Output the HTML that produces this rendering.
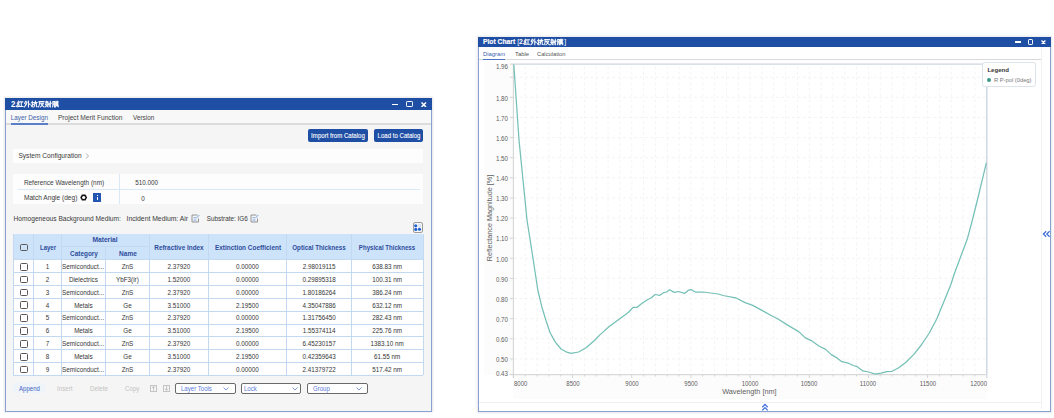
<!DOCTYPE html><html><head><meta charset="utf-8"><style>
html,body{margin:0;padding:0;background:#fff;width:1054px;height:418px;overflow:hidden;position:relative;font-family:"Liberation Sans", sans-serif}
.t{position:absolute;white-space:nowrap;font-family:"Liberation Sans",sans-serif}
.b{position:absolute}
</style></head><body>
<div class="b" style="left:3.00px;top:96.00px;width:431.00px;height:317.00px;background:rgba(0,0,0,0.035);border-radius:2px"></div>
<div class="b" style="left:4.00px;top:97.00px;width:429.00px;height:315.00px;background:rgba(0,0,0,0.03)"></div>
<div class="b" style="left:5.00px;top:98.00px;width:427.20px;height:313.50px;background:#f5f5f5;border:1.2px solid #87a1d3;border-top:none;box-sizing:border-box"></div>
<div class="b" style="left:5.00px;top:98.00px;width:427.20px;height:12.40px;background:#1f4fa5"></div>
<div class="t" style="left:10.60px;top:99.30px;font-size:8.4px;line-height:10px;color:#fff;font-weight:bold;transform:scaleX(0.92);transform-origin:0 50%;">2.</div>
<svg class="b" style="left:17.00px;top:101.10px;overflow:visible" width="42.30" height="6.10"><g transform="translate(0.00,0) scale(0.615,0.610)"><path d="M2.6,0.3 L0.8,3.6 L3.2,3.3 L0.6,7.0 L3.6,6.4 M0.5,9.6 L3.8,8.6 M4.6,1.4 H9.4 M7.0,1.4 V9.0 M4.2,9.0 H9.8" fill="none" stroke="#fff" stroke-width="1.05" stroke-opacity="0.95" vector-effect="non-scaling-stroke" stroke-linecap="square"/></g><g transform="translate(7.05,0) scale(0.615,0.610)"><path d="M2.8,0.2 L0.9,3.6 M2.0,1.8 H4.8 Q4.2,6.5 0.5,9.8 M1.4,4.3 L3.2,5.6 M7.2,0.2 V9.9 M7.5,4.0 L9.8,5.8" fill="none" stroke="#fff" stroke-width="1.05" stroke-opacity="0.95" vector-effect="non-scaling-stroke" stroke-linecap="square"/></g><g transform="translate(14.10,0) scale(0.615,0.610)"><path d="M0.3,3.0 H3.4 M2.0,0.3 V9.4 L1.0,8.9 M0.3,7.6 L3.6,5.8 M7.0,0.2 L7.4,1.3 M4.4,2.3 H9.9 M5.8,4.2 H8.6 V9.1 L9.9,9.3 M5.8,4.2 V7.0 L4.4,9.7" fill="none" stroke="#fff" stroke-width="1.05" stroke-opacity="0.95" vector-effect="non-scaling-stroke" stroke-linecap="square"/></g><g transform="translate(21.15,0) scale(0.615,0.610)"><path d="M1.4,1.0 H9.6 M2.0,1.0 V5.5 Q2.0,8.0 0.4,9.7 M3.6,3.6 H8.6 Q7.0,7.5 3.6,9.7 M5.0,5.2 Q7.0,8.5 9.8,9.7" fill="none" stroke="#fff" stroke-width="1.05" stroke-opacity="0.95" vector-effect="non-scaling-stroke" stroke-linecap="square"/></g><g transform="translate(28.20,0) scale(0.615,0.610)"><path d="M2.4,0.2 L1.9,1.0 M1.0,1.4 H4.4 V9.6 L3.6,9.2 M1.0,1.4 V5.4 M1.0,3.4 H4.4 M0.4,6.0 H5.0 M3.2,6.4 L0.4,9.6 M5.5,3.6 H9.9 M8.4,0.3 V9.6 L7.4,9.1 M6.3,5.6 L7.3,7.0" fill="none" stroke="#fff" stroke-width="1.05" stroke-opacity="0.95" vector-effect="non-scaling-stroke" stroke-linecap="square"/></g><g transform="translate(35.25,0) scale(0.615,0.610)"><path d="M0.9,1.0 V7.8 L0.4,9.6 M0.9,1.0 H3.6 V9.6 M0.9,3.8 H3.6 M0.9,6.2 H3.6 M4.6,1.5 H9.9 M6.2,0.3 V2.6 M8.4,0.3 V2.6 M5.5,3.2 H9.0 V6.0 H5.5 Z M5.5,4.6 H9.0 M4.5,7.0 H9.9 M7.2,6.0 L5.0,9.7 M7.3,7.2 L9.9,9.6" fill="none" stroke="#fff" stroke-width="1.05" stroke-opacity="0.95" vector-effect="non-scaling-stroke" stroke-linecap="square"/></g></svg>
<div class="b" style="left:392.00px;top:103.55px;width:6.20px;height:1.50px;background:#fff"></div>
<div class="b" style="left:406.00px;top:101.40px;width:6.70px;height:5.80px;border:1.5px solid #fff;box-sizing:border-box;border-radius:1.2px"></div>
<svg class="b" style="left:421.30px;top:101.55px" width="5.50" height="5.50"><path d="M0.5,0.5 L5.00,5.00 M5.00,0.5 L0.5,5.00" stroke="#fff" stroke-width="1.5"/></svg>
<div class="b" style="left:6.20px;top:110.40px;width:424.80px;height:12.90px;background:#f8f8f8"></div>
<div class="b" style="left:6.20px;top:123.30px;width:424.80px;height:1.40px;background:#dcdcdc"></div>
<div class="b" style="left:10.60px;top:123.10px;width:37.40px;height:1.70px;background:#5b7fc6"></div>
<div class="t" style="left:10.80px;top:113.00px;font-size:6.3px;line-height:10px;color:#3f5fa8;font-weight:normal;">Layer Design</div>
<div class="t" style="left:57.90px;top:113.00px;font-size:6.63px;line-height:10px;color:#444;font-weight:normal;">Project Merit Function</div>
<div class="t" style="left:133.00px;top:113.00px;font-size:6.36px;line-height:10px;color:#444;font-weight:normal;">Version</div>
<div class="b" style="left:308.00px;top:129.20px;width:59.90px;height:13.30px;background:#1f4fa5;border-radius:2px"></div>
<div class="t" style="left:237.95px;width:200px;text-align:center;top:131.10px;font-size:7.4px;line-height:10px;color:#fff;font-weight:normal;-webkit-text-stroke:0.1px #fff;transform:scaleX(0.8229729729729729);transform-origin:50% 50%;">Import from Catalog</div>
<div class="b" style="left:374.10px;top:129.20px;width:49.10px;height:13.30px;background:#1f4fa5;border-radius:2px"></div>
<div class="t" style="left:298.65px;width:200px;text-align:center;top:131.10px;font-size:7.4px;line-height:10px;color:#fff;font-weight:normal;-webkit-text-stroke:0.1px #fff;transform:scaleX(0.8216216216216216);transform-origin:50% 50%;">Load to Catalog</div>
<div class="b" style="left:13.00px;top:149.20px;width:410.00px;height:14.30px;background:#fdfdfd"></div>
<div class="t" style="left:18.40px;top:151.20px;font-size:6.62px;line-height:10px;color:#3a3a3a;font-weight:normal;">System Configuration</div>
<svg class="b" style="left:84.6px;top:152.9px" width="5" height="6"><path d="M1,0.5 L3.5,3 L1,5.5" fill="none" stroke="#999" stroke-width="0.8"/></svg>
<div class="b" style="left:13.00px;top:174.30px;width:410.00px;height:30.20px;background:#fdfdfd"></div>
<div class="b" style="left:119.00px;top:174.30px;width:0.90px;height:30.20px;background:#dbe8f6"></div>
<div class="b" style="left:18.40px;top:188.50px;width:401.60px;height:0.90px;background:#dbe8f6"></div>
<div class="t" style="left:23.90px;top:177.60px;font-size:6.45px;line-height:10px;color:#3a3a3a;font-weight:normal;">Reference Wavelength (nm)</div>
<div class="t" style="left:135.30px;top:178.10px;font-size:6.3px;line-height:10px;color:#3a3a3a;font-weight:normal;">510.000</div>
<div class="t" style="left:23.90px;top:193.00px;font-size:6.6px;line-height:10px;color:#3a3a3a;font-weight:normal;">Match Angle (deg)</div>
<div class="t" style="left:141.20px;top:193.50px;font-size:6.3px;line-height:10px;color:#3a3a3a;font-weight:normal;">0</div>
<svg class="b" style="left:80.0px;top:194.2px" width="7.4" height="7" viewBox="0 0 10 9.5"><path d="M0.3,4.75 L2.6,0.6 L7.4,0.6 L9.7,4.75 L7.4,8.9 L2.6,8.9 Z" fill="#151515"/><circle cx="5" cy="4.75" r="2.2" fill="#fdfdfd"/></svg>
<div class="b" style="left:93.10px;top:193.30px;width:7.90px;height:8.30px;background:#2455b0"></div>
<div class="b" style="left:96.60px;top:194.60px;width:1.10px;height:1.10px;background:#fff"></div>
<div class="b" style="left:96.60px;top:196.50px;width:1.10px;height:3.90px;background:#fff"></div>
<div class="t" style="left:13.60px;top:213.60px;font-size:6.62px;line-height:10px;color:#3a3a3a;font-weight:normal;">Homogeneous Background Medium:</div>
<div class="t" style="left:126.50px;top:213.60px;font-size:6.8px;line-height:10px;color:#3a3a3a;font-weight:normal;">Incident Medium: Air</div>
<div class="t" style="left:206.80px;top:213.60px;font-size:6.37px;line-height:10px;color:#3a3a3a;font-weight:normal;">Substrate: IG6</div>
<svg class="b" style="left:190.5px;top:213.8px" width="9" height="9" viewBox="0 0 9 9"><path d="M6.5,1 H1 V8 H7.5 V4.5" fill="none" stroke="#8a8a8a" stroke-width="0.9"/><path d="M2.5,3.5 H5 M2.5,5.2 H5.5 M2.5,6.8 H5.5" stroke="#7fa6e0" stroke-width="0.7"/><path d="M5.5,4 L8.3,1" stroke="#6b9ae0" stroke-width="0.9"/></svg>
<svg class="b" style="left:250.3px;top:213.8px" width="9" height="9" viewBox="0 0 9 9"><path d="M6.5,1 H1 V8 H7.5 V4.5" fill="none" stroke="#8a8a8a" stroke-width="0.9"/><path d="M2.5,3.5 H5 M2.5,5.2 H5.5 M2.5,6.8 H5.5" stroke="#7fa6e0" stroke-width="0.7"/><path d="M5.5,4 L8.3,1" stroke="#6b9ae0" stroke-width="0.9"/></svg>
<div class="b" style="left:412.60px;top:222.20px;width:10.20px;height:10.50px;border:1.2px solid #9c9c9c;border-radius:2px;box-sizing:border-box;background:#f7f7f7"></div>
<svg class="b" style="left:0;top:0" width="1054" height="418"><circle cx="415.7" cy="225.8" r="1.55" fill="#1f5ed4"/><circle cx="419.6" cy="225.7" r="1.3" fill="none" stroke="#bcd0f0" stroke-width="0.7"/><circle cx="415.8" cy="229.4" r="1.55" fill="#1f5ed4"/><circle cx="419.5" cy="229.3" r="1.55" fill="#1f5ed4"/></svg>
<div class="b" style="left:13.40px;top:234.00px;width:409.60px;height:25.70px;background:#cde3fa;border-radius:2px 2px 0 0"></div>
<div class="b" style="left:13.40px;top:259.70px;width:409.60px;height:115.65px;background:#fff"></div>
<div class="b" style="left:33.25px;top:234.00px;width:0.90px;height:141.35px;background:#c3d9f2"></div>
<div class="b" style="left:60.85px;top:234.00px;width:0.90px;height:141.35px;background:#c3d9f2"></div>
<div class="b" style="left:105.05px;top:246.50px;width:0.90px;height:128.85px;background:#c3d9f2"></div>
<div class="b" style="left:148.95px;top:234.00px;width:0.90px;height:141.35px;background:#c3d9f2"></div>
<div class="b" style="left:207.95px;top:234.00px;width:0.90px;height:141.35px;background:#c3d9f2"></div>
<div class="b" style="left:286.15px;top:234.00px;width:0.90px;height:141.35px;background:#c3d9f2"></div>
<div class="b" style="left:351.05px;top:234.00px;width:0.90px;height:141.35px;background:#c3d9f2"></div>
<div class="b" style="left:61.30px;top:246.10px;width:88.10px;height:0.80px;background:#c3d9f2"></div>
<div class="b" style="left:13.40px;top:259.25px;width:409.60px;height:0.90px;background:#c3d9f2"></div>
<div class="b" style="left:13.40px;top:272.10px;width:409.60px;height:0.90px;background:#c3d9f2"></div>
<div class="b" style="left:13.40px;top:284.95px;width:409.60px;height:0.90px;background:#c3d9f2"></div>
<div class="b" style="left:13.40px;top:297.80px;width:409.60px;height:0.90px;background:#c3d9f2"></div>
<div class="b" style="left:13.40px;top:310.65px;width:409.60px;height:0.90px;background:#c3d9f2"></div>
<div class="b" style="left:13.40px;top:323.50px;width:409.60px;height:0.90px;background:#c3d9f2"></div>
<div class="b" style="left:13.40px;top:336.35px;width:409.60px;height:0.90px;background:#c3d9f2"></div>
<div class="b" style="left:13.40px;top:349.20px;width:409.60px;height:0.90px;background:#c3d9f2"></div>
<div class="b" style="left:13.40px;top:362.05px;width:409.60px;height:0.90px;background:#c3d9f2"></div>
<div class="b" style="left:12.90px;top:234.00px;width:0.90px;height:141.35px;background:#c3d9f2"></div>
<div class="b" style="left:13.40px;top:374.85px;width:409.60px;height:0.90px;background:#c3d9f2"></div>
<div class="b" style="left:422.60px;top:234.00px;width:0.90px;height:141.35px;background:#c3d9f2"></div>
<div class="b" style="left:20.00px;top:243.50px;width:7.80px;height:7.70px;border:1.25px solid #5e5656;border-radius:1.5px;box-sizing:border-box"></div>
<div class="t" style="left:-52.25px;width:200px;text-align:center;top:242.80px;font-size:7.0px;line-height:10px;color:#2d4d9c;font-weight:bold;transform:scaleX(0.862);transform-origin:50% 50%;">Layer</div>
<div class="t" style="left:5.45px;width:200px;text-align:center;top:235.40px;font-size:7.0px;line-height:10px;color:#2d4d9c;font-weight:bold;transform:scaleX(0.949);transform-origin:50% 50%;">Material</div>
<div class="t" style="left:-16.40px;width:200px;text-align:center;top:248.90px;font-size:7.0px;line-height:10px;color:#2d4d9c;font-weight:bold;transform:scaleX(0.916);transform-origin:50% 50%;">Category</div>
<div class="t" style="left:27.60px;width:200px;text-align:center;top:248.90px;font-size:7.0px;line-height:10px;color:#2d4d9c;font-weight:bold;transform:scaleX(0.934);transform-origin:50% 50%;">Name</div>
<div class="t" style="left:79.05px;width:200px;text-align:center;top:242.80px;font-size:7.0px;line-height:10px;color:#2d4d9c;font-weight:bold;transform:scaleX(0.912);transform-origin:50% 50%;">Refractive Index</div>
<div class="t" style="left:147.85px;width:200px;text-align:center;top:242.80px;font-size:7.0px;line-height:10px;color:#2d4d9c;font-weight:bold;transform:scaleX(0.919);transform-origin:50% 50%;">Extinction Coefficient</div>
<div class="t" style="left:219.05px;width:200px;text-align:center;top:242.80px;font-size:7.0px;line-height:10px;color:#2d4d9c;font-weight:bold;transform:scaleX(0.893);transform-origin:50% 50%;">Optical Thickness</div>
<div class="t" style="left:287.15px;width:200px;text-align:center;top:242.80px;font-size:7.0px;line-height:10px;color:#2d4d9c;font-weight:bold;transform:scaleX(0.872);transform-origin:50% 50%;">Physical Thickness</div>
<div class="b" style="left:20.20px;top:262.82px;width:7.70px;height:7.80px;border:1.25px solid #5e5656;border-radius:1.5px;box-sizing:border-box"></div>
<div class="t" style="left:-52.50px;width:200px;text-align:center;top:262.02px;font-size:6.3px;line-height:10px;color:#363636;font-weight:normal;">1</div>
<div class="t" style="left:61.90px;top:262.02px;font-size:6.3px;line-height:10px;color:#363636;font-weight:normal;letter-spacing:0.05px">Semiconduct...</div>
<div class="t" style="left:27.45px;width:200px;text-align:center;top:262.02px;font-size:6.3px;line-height:10px;color:#363636;font-weight:normal;">ZnS</div>
<div class="t" style="left:78.90px;width:200px;text-align:center;top:262.02px;font-size:6.3px;line-height:10px;color:#363636;font-weight:normal;">2.37920</div>
<div class="t" style="left:147.50px;width:200px;text-align:center;top:262.02px;font-size:6.3px;line-height:10px;color:#363636;font-weight:normal;">0.00000</div>
<div class="t" style="left:219.05px;width:200px;text-align:center;top:262.02px;font-size:6.3px;line-height:10px;color:#363636;font-weight:normal;">2.98019115</div>
<div class="t" style="left:287.25px;width:200px;text-align:center;top:262.02px;font-size:6.3px;line-height:10px;color:#363636;font-weight:normal;">638.83 nm</div>
<div class="b" style="left:20.20px;top:275.68px;width:7.70px;height:7.80px;border:1.25px solid #5e5656;border-radius:1.5px;box-sizing:border-box"></div>
<div class="t" style="left:-52.50px;width:200px;text-align:center;top:274.88px;font-size:6.3px;line-height:10px;color:#363636;font-weight:normal;">2</div>
<div class="t" style="left:-16.60px;width:200px;text-align:center;top:274.88px;font-size:6.3px;line-height:10px;color:#363636;font-weight:normal;">Dielectrics</div>
<div class="t" style="left:27.45px;width:200px;text-align:center;top:274.88px;font-size:6.3px;line-height:10px;color:#363636;font-weight:normal;">YbF3(ir)</div>
<div class="t" style="left:78.90px;width:200px;text-align:center;top:274.88px;font-size:6.3px;line-height:10px;color:#363636;font-weight:normal;">1.52000</div>
<div class="t" style="left:147.50px;width:200px;text-align:center;top:274.88px;font-size:6.3px;line-height:10px;color:#363636;font-weight:normal;">0.00000</div>
<div class="t" style="left:219.05px;width:200px;text-align:center;top:274.88px;font-size:6.3px;line-height:10px;color:#363636;font-weight:normal;">0.29895318</div>
<div class="t" style="left:287.25px;width:200px;text-align:center;top:274.88px;font-size:6.3px;line-height:10px;color:#363636;font-weight:normal;">100.31 nm</div>
<div class="b" style="left:20.20px;top:288.52px;width:7.70px;height:7.80px;border:1.25px solid #5e5656;border-radius:1.5px;box-sizing:border-box"></div>
<div class="t" style="left:-52.50px;width:200px;text-align:center;top:287.72px;font-size:6.3px;line-height:10px;color:#363636;font-weight:normal;">3</div>
<div class="t" style="left:61.90px;top:287.72px;font-size:6.3px;line-height:10px;color:#363636;font-weight:normal;letter-spacing:0.05px">Semiconduct...</div>
<div class="t" style="left:27.45px;width:200px;text-align:center;top:287.72px;font-size:6.3px;line-height:10px;color:#363636;font-weight:normal;">ZnS</div>
<div class="t" style="left:78.90px;width:200px;text-align:center;top:287.72px;font-size:6.3px;line-height:10px;color:#363636;font-weight:normal;">2.37920</div>
<div class="t" style="left:147.50px;width:200px;text-align:center;top:287.72px;font-size:6.3px;line-height:10px;color:#363636;font-weight:normal;">0.00000</div>
<div class="t" style="left:219.05px;width:200px;text-align:center;top:287.72px;font-size:6.3px;line-height:10px;color:#363636;font-weight:normal;">1.80186264</div>
<div class="t" style="left:287.25px;width:200px;text-align:center;top:287.72px;font-size:6.3px;line-height:10px;color:#363636;font-weight:normal;">386.24 nm</div>
<div class="b" style="left:20.20px;top:301.38px;width:7.70px;height:7.80px;border:1.25px solid #5e5656;border-radius:1.5px;box-sizing:border-box"></div>
<div class="t" style="left:-52.50px;width:200px;text-align:center;top:300.57px;font-size:6.3px;line-height:10px;color:#363636;font-weight:normal;">4</div>
<div class="t" style="left:-16.60px;width:200px;text-align:center;top:300.57px;font-size:6.3px;line-height:10px;color:#363636;font-weight:normal;">Metals</div>
<div class="t" style="left:27.45px;width:200px;text-align:center;top:300.57px;font-size:6.3px;line-height:10px;color:#363636;font-weight:normal;">Ge</div>
<div class="t" style="left:78.90px;width:200px;text-align:center;top:300.57px;font-size:6.3px;line-height:10px;color:#363636;font-weight:normal;">3.51000</div>
<div class="t" style="left:147.50px;width:200px;text-align:center;top:300.57px;font-size:6.3px;line-height:10px;color:#363636;font-weight:normal;">2.19500</div>
<div class="t" style="left:219.05px;width:200px;text-align:center;top:300.57px;font-size:6.3px;line-height:10px;color:#363636;font-weight:normal;">4.35047886</div>
<div class="t" style="left:287.25px;width:200px;text-align:center;top:300.57px;font-size:6.3px;line-height:10px;color:#363636;font-weight:normal;">632.12 nm</div>
<div class="b" style="left:20.20px;top:314.22px;width:7.70px;height:7.80px;border:1.25px solid #5e5656;border-radius:1.5px;box-sizing:border-box"></div>
<div class="t" style="left:-52.50px;width:200px;text-align:center;top:313.42px;font-size:6.3px;line-height:10px;color:#363636;font-weight:normal;">5</div>
<div class="t" style="left:61.90px;top:313.42px;font-size:6.3px;line-height:10px;color:#363636;font-weight:normal;letter-spacing:0.05px">Semiconduct...</div>
<div class="t" style="left:27.45px;width:200px;text-align:center;top:313.42px;font-size:6.3px;line-height:10px;color:#363636;font-weight:normal;">ZnS</div>
<div class="t" style="left:78.90px;width:200px;text-align:center;top:313.42px;font-size:6.3px;line-height:10px;color:#363636;font-weight:normal;">2.37920</div>
<div class="t" style="left:147.50px;width:200px;text-align:center;top:313.42px;font-size:6.3px;line-height:10px;color:#363636;font-weight:normal;">0.00000</div>
<div class="t" style="left:219.05px;width:200px;text-align:center;top:313.42px;font-size:6.3px;line-height:10px;color:#363636;font-weight:normal;">1.31756450</div>
<div class="t" style="left:287.25px;width:200px;text-align:center;top:313.42px;font-size:6.3px;line-height:10px;color:#363636;font-weight:normal;">282.43 nm</div>
<div class="b" style="left:20.20px;top:327.07px;width:7.70px;height:7.80px;border:1.25px solid #5e5656;border-radius:1.5px;box-sizing:border-box"></div>
<div class="t" style="left:-52.50px;width:200px;text-align:center;top:326.27px;font-size:6.3px;line-height:10px;color:#363636;font-weight:normal;">6</div>
<div class="t" style="left:-16.60px;width:200px;text-align:center;top:326.27px;font-size:6.3px;line-height:10px;color:#363636;font-weight:normal;">Metals</div>
<div class="t" style="left:27.45px;width:200px;text-align:center;top:326.27px;font-size:6.3px;line-height:10px;color:#363636;font-weight:normal;">Ge</div>
<div class="t" style="left:78.90px;width:200px;text-align:center;top:326.27px;font-size:6.3px;line-height:10px;color:#363636;font-weight:normal;">3.51000</div>
<div class="t" style="left:147.50px;width:200px;text-align:center;top:326.27px;font-size:6.3px;line-height:10px;color:#363636;font-weight:normal;">2.19500</div>
<div class="t" style="left:219.05px;width:200px;text-align:center;top:326.27px;font-size:6.3px;line-height:10px;color:#363636;font-weight:normal;">1.55374114</div>
<div class="t" style="left:287.25px;width:200px;text-align:center;top:326.27px;font-size:6.3px;line-height:10px;color:#363636;font-weight:normal;">225.76 nm</div>
<div class="b" style="left:20.20px;top:339.92px;width:7.70px;height:7.80px;border:1.25px solid #5e5656;border-radius:1.5px;box-sizing:border-box"></div>
<div class="t" style="left:-52.50px;width:200px;text-align:center;top:339.12px;font-size:6.3px;line-height:10px;color:#363636;font-weight:normal;">7</div>
<div class="t" style="left:61.90px;top:339.12px;font-size:6.3px;line-height:10px;color:#363636;font-weight:normal;letter-spacing:0.05px">Semiconduct...</div>
<div class="t" style="left:27.45px;width:200px;text-align:center;top:339.12px;font-size:6.3px;line-height:10px;color:#363636;font-weight:normal;">ZnS</div>
<div class="t" style="left:78.90px;width:200px;text-align:center;top:339.12px;font-size:6.3px;line-height:10px;color:#363636;font-weight:normal;">2.37920</div>
<div class="t" style="left:147.50px;width:200px;text-align:center;top:339.12px;font-size:6.3px;line-height:10px;color:#363636;font-weight:normal;">0.00000</div>
<div class="t" style="left:219.05px;width:200px;text-align:center;top:339.12px;font-size:6.3px;line-height:10px;color:#363636;font-weight:normal;">6.45230157</div>
<div class="t" style="left:287.25px;width:200px;text-align:center;top:339.12px;font-size:6.3px;line-height:10px;color:#363636;font-weight:normal;">1383.10 nm</div>
<div class="b" style="left:20.20px;top:352.77px;width:7.70px;height:7.80px;border:1.25px solid #5e5656;border-radius:1.5px;box-sizing:border-box"></div>
<div class="t" style="left:-52.50px;width:200px;text-align:center;top:351.97px;font-size:6.3px;line-height:10px;color:#363636;font-weight:normal;">8</div>
<div class="t" style="left:-16.60px;width:200px;text-align:center;top:351.97px;font-size:6.3px;line-height:10px;color:#363636;font-weight:normal;">Metals</div>
<div class="t" style="left:27.45px;width:200px;text-align:center;top:351.97px;font-size:6.3px;line-height:10px;color:#363636;font-weight:normal;">Ge</div>
<div class="t" style="left:78.90px;width:200px;text-align:center;top:351.97px;font-size:6.3px;line-height:10px;color:#363636;font-weight:normal;">3.51000</div>
<div class="t" style="left:147.50px;width:200px;text-align:center;top:351.97px;font-size:6.3px;line-height:10px;color:#363636;font-weight:normal;">2.19500</div>
<div class="t" style="left:219.05px;width:200px;text-align:center;top:351.97px;font-size:6.3px;line-height:10px;color:#363636;font-weight:normal;">0.42359643</div>
<div class="t" style="left:287.25px;width:200px;text-align:center;top:351.97px;font-size:6.3px;line-height:10px;color:#363636;font-weight:normal;">61.55 nm</div>
<div class="b" style="left:20.20px;top:365.62px;width:7.70px;height:7.80px;border:1.25px solid #5e5656;border-radius:1.5px;box-sizing:border-box"></div>
<div class="t" style="left:-52.50px;width:200px;text-align:center;top:364.82px;font-size:6.3px;line-height:10px;color:#363636;font-weight:normal;">9</div>
<div class="t" style="left:61.90px;top:364.82px;font-size:6.3px;line-height:10px;color:#363636;font-weight:normal;letter-spacing:0.05px">Semiconduct...</div>
<div class="t" style="left:27.45px;width:200px;text-align:center;top:364.82px;font-size:6.3px;line-height:10px;color:#363636;font-weight:normal;">ZnS</div>
<div class="t" style="left:78.90px;width:200px;text-align:center;top:364.82px;font-size:6.3px;line-height:10px;color:#363636;font-weight:normal;">2.37920</div>
<div class="t" style="left:147.50px;width:200px;text-align:center;top:364.82px;font-size:6.3px;line-height:10px;color:#363636;font-weight:normal;">0.00000</div>
<div class="t" style="left:219.05px;width:200px;text-align:center;top:364.82px;font-size:6.3px;line-height:10px;color:#363636;font-weight:normal;">2.41379722</div>
<div class="t" style="left:287.25px;width:200px;text-align:center;top:364.82px;font-size:6.3px;line-height:10px;color:#363636;font-weight:normal;">517.42 nm</div>
<div class="b" style="left:13.20px;top:383.20px;width:31.50px;height:9.80px;background:#eff4fb;border-radius:1px"></div>
<div class="t" style="left:19.00px;top:383.60px;font-size:6.6px;line-height:10px;color:#4466c0;font-weight:normal;transform:scaleX(0.92);transform-origin:0 50%;">Append</div>
<div class="t" style="left:56.80px;top:383.60px;font-size:6.5px;line-height:10px;color:#c2c2c2;font-weight:normal;transform:scaleX(0.95);transform-origin:0 50%;">Insert</div>
<div class="t" style="left:89.80px;top:383.60px;font-size:6.5px;line-height:10px;color:#c2c2c2;font-weight:normal;transform:scaleX(0.95);transform-origin:0 50%;">Delete</div>
<div class="t" style="left:124.50px;top:383.60px;font-size:6.5px;line-height:10px;color:#c2c2c2;font-weight:normal;transform:scaleX(0.95);transform-origin:0 50%;">Copy</div>
<div class="b" style="left:149.50px;top:385.30px;width:7.00px;height:6.60px;border:0.9px solid #c4c4c4;box-sizing:border-box"></div>
<svg class="b" style="left:149.5px;top:385.3px" width="7" height="6.6"><path d="M3.5,1.3 V5.6 M2,2.8 L3.5,1.3 L5,2.8" fill="none" stroke="#bdbdbd" stroke-width="0.9"/></svg>
<div class="b" style="left:162.90px;top:385.30px;width:7.00px;height:6.60px;border:0.9px solid #c4c4c4;box-sizing:border-box"></div>
<svg class="b" style="left:162.9px;top:385.3px" width="7" height="6.6"><path d="M3.5,1 V5.3 M2,3.8 L3.5,5.3 L5,3.8" fill="none" stroke="#bdbdbd" stroke-width="0.9"/></svg>
<div class="b" style="left:175.00px;top:383.20px;width:60.70px;height:10.50px;border:1.25px solid #6a6a6a;border-radius:2px;box-sizing:border-box;background:#fff"></div>
<div class="t" style="left:181.00px;top:383.50px;font-size:6.9px;line-height:10px;color:#5a78d8;font-weight:normal;transform:scaleX(0.88);transform-origin:0 50%;">Layer Tools</div>
<svg class="b" style="left:223.30px;top:386.9px" width="6" height="4"><path d="M0.5,0.5 L3,3 L5.5,0.5" fill="none" stroke="#5a78d0" stroke-width="0.75"/></svg>
<div class="b" style="left:241.10px;top:383.20px;width:60.40px;height:10.50px;border:1.25px solid #6a6a6a;border-radius:2px;box-sizing:border-box;background:#fff"></div>
<div class="t" style="left:244.10px;top:383.50px;font-size:6.9px;line-height:10px;color:#5a78d8;font-weight:normal;transform:scaleX(0.88);transform-origin:0 50%;">Lock</div>
<svg class="b" style="left:292.30px;top:386.9px" width="6" height="4"><path d="M0.5,0.5 L3,3 L5.5,0.5" fill="none" stroke="#5a78d0" stroke-width="0.75"/></svg>
<div class="b" style="left:307.00px;top:383.20px;width:60.60px;height:10.50px;border:1.25px solid #6a6a6a;border-radius:2px;box-sizing:border-box;background:#fff"></div>
<div class="t" style="left:313.00px;top:383.50px;font-size:6.9px;line-height:10px;color:#5a78d8;font-weight:normal;transform:scaleX(0.88);transform-origin:0 50%;">Group</div>
<svg class="b" style="left:355.50px;top:386.9px" width="6" height="4"><path d="M0.5,0.5 L3,3 L5.5,0.5" fill="none" stroke="#5a78d0" stroke-width="0.75"/></svg>
<div class="b" style="left:476.20px;top:34.80px;width:576.60px;height:378.80px;background:rgba(0,0,0,0.03);border-radius:2px"></div>
<div class="b" style="left:477.20px;top:35.80px;width:574.60px;height:376.80px;background:rgba(0,0,0,0.03)"></div>
<div class="b" style="left:478.20px;top:36.80px;width:572.60px;height:374.80px;background:#fff;border:1.2px solid #87a1d3;border-top:none;box-sizing:border-box"></div>
<div class="b" style="left:478.20px;top:36.80px;width:572.60px;height:10.60px;background:#1f4fa5"></div>
<div class="t" style="left:483.40px;top:37.10px;font-size:7.4px;line-height:10px;color:#fff;font-weight:bold;-webkit-text-stroke:0.15px #fff;transform:scaleX(0.91);transform-origin:0 50%;">Plot Chart</div>
<div class="t" style="left:517.30px;top:37.10px;font-size:7.2px;line-height:10px;color:#fff;font-weight:normal;">[</div>
<div class="t" style="left:519.20px;top:37.00px;font-size:7.6px;line-height:10px;color:#fff;font-weight:bold;transform:scaleX(0.9);transform-origin:0 50%;">2.</div>
<svg class="b" style="left:524.40px;top:39.20px;overflow:visible" width="39.78" height="5.90"><g transform="translate(0.00,0) scale(0.573,0.590)"><path d="M2.6,0.3 L0.8,3.6 L3.2,3.3 L0.6,7.0 L3.6,6.4 M0.5,9.6 L3.8,8.6 M4.6,1.4 H9.4 M7.0,1.4 V9.0 M4.2,9.0 H9.8" fill="none" stroke="#fff" stroke-width="1.05" stroke-opacity="0.95" vector-effect="non-scaling-stroke" stroke-linecap="square"/></g><g transform="translate(6.63,0) scale(0.573,0.590)"><path d="M2.8,0.2 L0.9,3.6 M2.0,1.8 H4.8 Q4.2,6.5 0.5,9.8 M1.4,4.3 L3.2,5.6 M7.2,0.2 V9.9 M7.5,4.0 L9.8,5.8" fill="none" stroke="#fff" stroke-width="1.05" stroke-opacity="0.95" vector-effect="non-scaling-stroke" stroke-linecap="square"/></g><g transform="translate(13.26,0) scale(0.573,0.590)"><path d="M0.3,3.0 H3.4 M2.0,0.3 V9.4 L1.0,8.9 M0.3,7.6 L3.6,5.8 M7.0,0.2 L7.4,1.3 M4.4,2.3 H9.9 M5.8,4.2 H8.6 V9.1 L9.9,9.3 M5.8,4.2 V7.0 L4.4,9.7" fill="none" stroke="#fff" stroke-width="1.05" stroke-opacity="0.95" vector-effect="non-scaling-stroke" stroke-linecap="square"/></g><g transform="translate(19.89,0) scale(0.573,0.590)"><path d="M1.4,1.0 H9.6 M2.0,1.0 V5.5 Q2.0,8.0 0.4,9.7 M3.6,3.6 H8.6 Q7.0,7.5 3.6,9.7 M5.0,5.2 Q7.0,8.5 9.8,9.7" fill="none" stroke="#fff" stroke-width="1.05" stroke-opacity="0.95" vector-effect="non-scaling-stroke" stroke-linecap="square"/></g><g transform="translate(26.52,0) scale(0.573,0.590)"><path d="M2.4,0.2 L1.9,1.0 M1.0,1.4 H4.4 V9.6 L3.6,9.2 M1.0,1.4 V5.4 M1.0,3.4 H4.4 M0.4,6.0 H5.0 M3.2,6.4 L0.4,9.6 M5.5,3.6 H9.9 M8.4,0.3 V9.6 L7.4,9.1 M6.3,5.6 L7.3,7.0" fill="none" stroke="#fff" stroke-width="1.05" stroke-opacity="0.95" vector-effect="non-scaling-stroke" stroke-linecap="square"/></g><g transform="translate(33.15,0) scale(0.573,0.590)"><path d="M0.9,1.0 V7.8 L0.4,9.6 M0.9,1.0 H3.6 V9.6 M0.9,3.8 H3.6 M0.9,6.2 H3.6 M4.6,1.5 H9.9 M6.2,0.3 V2.6 M8.4,0.3 V2.6 M5.5,3.2 H9.0 V6.0 H5.5 Z M5.5,4.6 H9.0 M4.5,7.0 H9.9 M7.2,6.0 L5.0,9.7 M7.3,7.2 L9.9,9.6" fill="none" stroke="#fff" stroke-width="1.05" stroke-opacity="0.95" vector-effect="non-scaling-stroke" stroke-linecap="square"/></g></svg>
<div class="t" style="left:564.20px;top:37.10px;font-size:7.2px;line-height:10px;color:#fff;font-weight:normal;">]</div>
<div class="b" style="left:1014.50px;top:41.33px;width:6.30px;height:1.35px;background:#fff"></div>
<div class="b" style="left:1027.60px;top:39.30px;width:5.80px;height:5.30px;border:1.35px solid #fff;box-sizing:border-box;border-radius:1.2px"></div>
<svg class="b" style="left:1041.30px;top:39.55px" width="4.90" height="4.90"><path d="M0.5,0.5 L4.40,4.40 M4.40,0.5 L0.5,4.40" stroke="#fff" stroke-width="1.35"/></svg>
<div class="t" style="left:483.20px;top:49.00px;font-size:6.2px;line-height:10px;color:#3d5fb5;font-weight:normal;transform:scaleX(0.952);transform-origin:0 50%;">Diagram</div>
<div class="t" style="left:514.50px;top:49.00px;font-size:6.2px;line-height:10px;color:#555;font-weight:normal;transform:scaleX(0.952);transform-origin:0 50%;">Table</div>
<div class="t" style="left:537.30px;top:49.00px;font-size:6.2px;line-height:10px;color:#555;font-weight:normal;transform:scaleX(0.929);transform-origin:0 50%;">Calculation</div>
<div class="b" style="left:479.40px;top:59.00px;width:561.60px;height:1.00px;background:#d9d9d9"></div>
<div class="b" style="left:483.20px;top:58.60px;width:22.30px;height:1.40px;background:#4d73c4"></div>
<div class="b" style="left:1040.90px;top:47.20px;width:0.80px;height:362.30px;background:#f1f1f1"></div>
<svg class="b" style="left:0;top:0" width="1054" height="418"><path d="M1046.2,231.3 L1043.4,234 L1046.2,236.7 M1049.6,231.3 L1046.8,234 L1049.6,236.7 M762.3,407.2 L765,404.4 L767.7,407.2 M762.3,410.4 L765,407.6 L767.7,410.4" fill="none" stroke="#3d6fd8" stroke-width="1.25"/></svg>
<div class="b" style="left:479.40px;top:402.00px;width:561.50px;height:0.80px;background:#f0f0f0"></div>
<div class="b" style="left:483.60px;top:63.00px;width:29.80px;height:311.70px;background:#fcfcfc"></div>
<div class="b" style="left:513.40px;top:374.70px;width:473.40px;height:23.90px;background:#fcfcfc"></div>
<div class="b" style="left:513.40px;top:64.10px;width:473.40px;height:310.60px;background:#fff"></div>
<svg class="b" style="left:0;top:0" width="1054" height="418"><line x1="525.24" y1="64.1" x2="525.24" y2="374.7" stroke="#f4f4f4" stroke-width="1" stroke-dasharray="3,2.5" stroke-dashoffset="3.4"/><line x1="537.07" y1="64.1" x2="537.07" y2="374.7" stroke="#f4f4f4" stroke-width="1" stroke-dasharray="3,2.5" stroke-dashoffset="3.4"/><line x1="548.90" y1="64.1" x2="548.90" y2="374.7" stroke="#f4f4f4" stroke-width="1" stroke-dasharray="3,2.5" stroke-dashoffset="3.4"/><line x1="560.74" y1="64.1" x2="560.74" y2="374.7" stroke="#f4f4f4" stroke-width="1" stroke-dasharray="3,2.5" stroke-dashoffset="3.4"/><line x1="572.57" y1="64.1" x2="572.57" y2="374.7" stroke="#f4f4f4" stroke-width="1" stroke-dasharray="3,2.5" stroke-dashoffset="3.4"/><line x1="584.41" y1="64.1" x2="584.41" y2="374.7" stroke="#f4f4f4" stroke-width="1" stroke-dasharray="3,2.5" stroke-dashoffset="3.4"/><line x1="596.25" y1="64.1" x2="596.25" y2="374.7" stroke="#f4f4f4" stroke-width="1" stroke-dasharray="3,2.5" stroke-dashoffset="3.4"/><line x1="608.08" y1="64.1" x2="608.08" y2="374.7" stroke="#f4f4f4" stroke-width="1" stroke-dasharray="3,2.5" stroke-dashoffset="3.4"/><line x1="619.91" y1="64.1" x2="619.91" y2="374.7" stroke="#f4f4f4" stroke-width="1" stroke-dasharray="3,2.5" stroke-dashoffset="3.4"/><line x1="631.75" y1="64.1" x2="631.75" y2="374.7" stroke="#f4f4f4" stroke-width="1" stroke-dasharray="3,2.5" stroke-dashoffset="3.4"/><line x1="643.59" y1="64.1" x2="643.59" y2="374.7" stroke="#f4f4f4" stroke-width="1" stroke-dasharray="3,2.5" stroke-dashoffset="3.4"/><line x1="655.42" y1="64.1" x2="655.42" y2="374.7" stroke="#f4f4f4" stroke-width="1" stroke-dasharray="3,2.5" stroke-dashoffset="3.4"/><line x1="667.25" y1="64.1" x2="667.25" y2="374.7" stroke="#f4f4f4" stroke-width="1" stroke-dasharray="3,2.5" stroke-dashoffset="3.4"/><line x1="679.09" y1="64.1" x2="679.09" y2="374.7" stroke="#f4f4f4" stroke-width="1" stroke-dasharray="3,2.5" stroke-dashoffset="3.4"/><line x1="690.92" y1="64.1" x2="690.92" y2="374.7" stroke="#f4f4f4" stroke-width="1" stroke-dasharray="3,2.5" stroke-dashoffset="3.4"/><line x1="702.76" y1="64.1" x2="702.76" y2="374.7" stroke="#f4f4f4" stroke-width="1" stroke-dasharray="3,2.5" stroke-dashoffset="3.4"/><line x1="714.60" y1="64.1" x2="714.60" y2="374.7" stroke="#f4f4f4" stroke-width="1" stroke-dasharray="3,2.5" stroke-dashoffset="3.4"/><line x1="726.43" y1="64.1" x2="726.43" y2="374.7" stroke="#f4f4f4" stroke-width="1" stroke-dasharray="3,2.5" stroke-dashoffset="3.4"/><line x1="738.26" y1="64.1" x2="738.26" y2="374.7" stroke="#f4f4f4" stroke-width="1" stroke-dasharray="3,2.5" stroke-dashoffset="3.4"/><line x1="750.10" y1="64.1" x2="750.10" y2="374.7" stroke="#f4f4f4" stroke-width="1" stroke-dasharray="3,2.5" stroke-dashoffset="3.4"/><line x1="761.93" y1="64.1" x2="761.93" y2="374.7" stroke="#f4f4f4" stroke-width="1" stroke-dasharray="3,2.5" stroke-dashoffset="3.4"/><line x1="773.77" y1="64.1" x2="773.77" y2="374.7" stroke="#f4f4f4" stroke-width="1" stroke-dasharray="3,2.5" stroke-dashoffset="3.4"/><line x1="785.61" y1="64.1" x2="785.61" y2="374.7" stroke="#f4f4f4" stroke-width="1" stroke-dasharray="3,2.5" stroke-dashoffset="3.4"/><line x1="797.44" y1="64.1" x2="797.44" y2="374.7" stroke="#f4f4f4" stroke-width="1" stroke-dasharray="3,2.5" stroke-dashoffset="3.4"/><line x1="809.27" y1="64.1" x2="809.27" y2="374.7" stroke="#f4f4f4" stroke-width="1" stroke-dasharray="3,2.5" stroke-dashoffset="3.4"/><line x1="821.11" y1="64.1" x2="821.11" y2="374.7" stroke="#f4f4f4" stroke-width="1" stroke-dasharray="3,2.5" stroke-dashoffset="3.4"/><line x1="832.94" y1="64.1" x2="832.94" y2="374.7" stroke="#f4f4f4" stroke-width="1" stroke-dasharray="3,2.5" stroke-dashoffset="3.4"/><line x1="844.78" y1="64.1" x2="844.78" y2="374.7" stroke="#f4f4f4" stroke-width="1" stroke-dasharray="3,2.5" stroke-dashoffset="3.4"/><line x1="856.62" y1="64.1" x2="856.62" y2="374.7" stroke="#f4f4f4" stroke-width="1" stroke-dasharray="3,2.5" stroke-dashoffset="3.4"/><line x1="868.45" y1="64.1" x2="868.45" y2="374.7" stroke="#f4f4f4" stroke-width="1" stroke-dasharray="3,2.5" stroke-dashoffset="3.4"/><line x1="880.28" y1="64.1" x2="880.28" y2="374.7" stroke="#f4f4f4" stroke-width="1" stroke-dasharray="3,2.5" stroke-dashoffset="3.4"/><line x1="892.12" y1="64.1" x2="892.12" y2="374.7" stroke="#f4f4f4" stroke-width="1" stroke-dasharray="3,2.5" stroke-dashoffset="3.4"/><line x1="903.95" y1="64.1" x2="903.95" y2="374.7" stroke="#f4f4f4" stroke-width="1" stroke-dasharray="3,2.5" stroke-dashoffset="3.4"/><line x1="915.79" y1="64.1" x2="915.79" y2="374.7" stroke="#f4f4f4" stroke-width="1" stroke-dasharray="3,2.5" stroke-dashoffset="3.4"/><line x1="927.62" y1="64.1" x2="927.62" y2="374.7" stroke="#f4f4f4" stroke-width="1" stroke-dasharray="3,2.5" stroke-dashoffset="3.4"/><line x1="939.46" y1="64.1" x2="939.46" y2="374.7" stroke="#f4f4f4" stroke-width="1" stroke-dasharray="3,2.5" stroke-dashoffset="3.4"/><line x1="951.29" y1="64.1" x2="951.29" y2="374.7" stroke="#f4f4f4" stroke-width="1" stroke-dasharray="3,2.5" stroke-dashoffset="3.4"/><line x1="963.13" y1="64.1" x2="963.13" y2="374.7" stroke="#f4f4f4" stroke-width="1" stroke-dasharray="3,2.5" stroke-dashoffset="3.4"/><line x1="974.96" y1="64.1" x2="974.96" y2="374.7" stroke="#f4f4f4" stroke-width="1" stroke-dasharray="3,2.5" stroke-dashoffset="3.4"/><line x1="513.4" y1="358.90" x2="986.8" y2="358.90" stroke="#f3f3f3" stroke-width="1" stroke-dasharray="3,2.45" stroke-dashoffset="4.75"/><line x1="513.4" y1="338.78" x2="986.8" y2="338.78" stroke="#f3f3f3" stroke-width="1" stroke-dasharray="3,2.45" stroke-dashoffset="4.75"/><line x1="513.4" y1="318.66" x2="986.8" y2="318.66" stroke="#f3f3f3" stroke-width="1" stroke-dasharray="3,2.45" stroke-dashoffset="4.75"/><line x1="513.4" y1="298.54" x2="986.8" y2="298.54" stroke="#f3f3f3" stroke-width="1" stroke-dasharray="3,2.45" stroke-dashoffset="4.75"/><line x1="513.4" y1="278.42" x2="986.8" y2="278.42" stroke="#f3f3f3" stroke-width="1" stroke-dasharray="3,2.45" stroke-dashoffset="4.75"/><line x1="513.4" y1="258.30" x2="986.8" y2="258.30" stroke="#f3f3f3" stroke-width="1" stroke-dasharray="3,2.45" stroke-dashoffset="4.75"/><line x1="513.4" y1="238.18" x2="986.8" y2="238.18" stroke="#f3f3f3" stroke-width="1" stroke-dasharray="3,2.45" stroke-dashoffset="4.75"/><line x1="513.4" y1="218.06" x2="986.8" y2="218.06" stroke="#f3f3f3" stroke-width="1" stroke-dasharray="3,2.45" stroke-dashoffset="4.75"/><line x1="513.4" y1="197.94" x2="986.8" y2="197.94" stroke="#f3f3f3" stroke-width="1" stroke-dasharray="3,2.45" stroke-dashoffset="4.75"/><line x1="513.4" y1="177.82" x2="986.8" y2="177.82" stroke="#f3f3f3" stroke-width="1" stroke-dasharray="3,2.45" stroke-dashoffset="4.75"/><line x1="513.4" y1="157.70" x2="986.8" y2="157.70" stroke="#f3f3f3" stroke-width="1" stroke-dasharray="3,2.45" stroke-dashoffset="4.75"/><line x1="513.4" y1="137.58" x2="986.8" y2="137.58" stroke="#f3f3f3" stroke-width="1" stroke-dasharray="3,2.45" stroke-dashoffset="4.75"/><line x1="513.4" y1="117.46" x2="986.8" y2="117.46" stroke="#f3f3f3" stroke-width="1" stroke-dasharray="3,2.45" stroke-dashoffset="4.75"/><line x1="513.4" y1="97.34" x2="986.8" y2="97.34" stroke="#f3f3f3" stroke-width="1" stroke-dasharray="3,2.45" stroke-dashoffset="4.75"/><line x1="513.4" y1="77.22" x2="986.8" y2="77.22" stroke="#f3f3f3" stroke-width="1" stroke-dasharray="3,2.45" stroke-dashoffset="4.75"/><line x1="513.4" y1="64.1" x2="986.8" y2="64.1" stroke="#cdd6e0" stroke-width="1.4"/><line x1="986.8" y1="64.1" x2="986.8" y2="374.7" stroke="#cdd6e0" stroke-width="1.4"/><line x1="513.4" y1="64.1" x2="513.4" y2="378.0" stroke="#d6d6d6" stroke-width="1.1"/><line x1="509.9" y1="374.7" x2="986.8" y2="374.7" stroke="#d9d9d9" stroke-width="1.2"/><line x1="513.40" y1="374.7" x2="513.40" y2="378.0" stroke="#d4d4d4" stroke-width="1"/><line x1="525.24" y1="374.7" x2="525.24" y2="376.5" stroke="#d4d4d4" stroke-width="1"/><line x1="537.07" y1="374.7" x2="537.07" y2="376.5" stroke="#d4d4d4" stroke-width="1"/><line x1="548.90" y1="374.7" x2="548.90" y2="376.5" stroke="#d4d4d4" stroke-width="1"/><line x1="560.74" y1="374.7" x2="560.74" y2="376.5" stroke="#d4d4d4" stroke-width="1"/><line x1="572.57" y1="374.7" x2="572.57" y2="378.0" stroke="#d4d4d4" stroke-width="1"/><line x1="584.41" y1="374.7" x2="584.41" y2="376.5" stroke="#d4d4d4" stroke-width="1"/><line x1="596.25" y1="374.7" x2="596.25" y2="376.5" stroke="#d4d4d4" stroke-width="1"/><line x1="608.08" y1="374.7" x2="608.08" y2="376.5" stroke="#d4d4d4" stroke-width="1"/><line x1="619.91" y1="374.7" x2="619.91" y2="376.5" stroke="#d4d4d4" stroke-width="1"/><line x1="631.75" y1="374.7" x2="631.75" y2="378.0" stroke="#d4d4d4" stroke-width="1"/><line x1="643.59" y1="374.7" x2="643.59" y2="376.5" stroke="#d4d4d4" stroke-width="1"/><line x1="655.42" y1="374.7" x2="655.42" y2="376.5" stroke="#d4d4d4" stroke-width="1"/><line x1="667.25" y1="374.7" x2="667.25" y2="376.5" stroke="#d4d4d4" stroke-width="1"/><line x1="679.09" y1="374.7" x2="679.09" y2="376.5" stroke="#d4d4d4" stroke-width="1"/><line x1="690.92" y1="374.7" x2="690.92" y2="378.0" stroke="#d4d4d4" stroke-width="1"/><line x1="702.76" y1="374.7" x2="702.76" y2="376.5" stroke="#d4d4d4" stroke-width="1"/><line x1="714.60" y1="374.7" x2="714.60" y2="376.5" stroke="#d4d4d4" stroke-width="1"/><line x1="726.43" y1="374.7" x2="726.43" y2="376.5" stroke="#d4d4d4" stroke-width="1"/><line x1="738.26" y1="374.7" x2="738.26" y2="376.5" stroke="#d4d4d4" stroke-width="1"/><line x1="750.10" y1="374.7" x2="750.10" y2="378.0" stroke="#d4d4d4" stroke-width="1"/><line x1="761.93" y1="374.7" x2="761.93" y2="376.5" stroke="#d4d4d4" stroke-width="1"/><line x1="773.77" y1="374.7" x2="773.77" y2="376.5" stroke="#d4d4d4" stroke-width="1"/><line x1="785.61" y1="374.7" x2="785.61" y2="376.5" stroke="#d4d4d4" stroke-width="1"/><line x1="797.44" y1="374.7" x2="797.44" y2="376.5" stroke="#d4d4d4" stroke-width="1"/><line x1="809.27" y1="374.7" x2="809.27" y2="378.0" stroke="#d4d4d4" stroke-width="1"/><line x1="821.11" y1="374.7" x2="821.11" y2="376.5" stroke="#d4d4d4" stroke-width="1"/><line x1="832.94" y1="374.7" x2="832.94" y2="376.5" stroke="#d4d4d4" stroke-width="1"/><line x1="844.78" y1="374.7" x2="844.78" y2="376.5" stroke="#d4d4d4" stroke-width="1"/><line x1="856.62" y1="374.7" x2="856.62" y2="376.5" stroke="#d4d4d4" stroke-width="1"/><line x1="868.45" y1="374.7" x2="868.45" y2="378.0" stroke="#d4d4d4" stroke-width="1"/><line x1="880.28" y1="374.7" x2="880.28" y2="376.5" stroke="#d4d4d4" stroke-width="1"/><line x1="892.12" y1="374.7" x2="892.12" y2="376.5" stroke="#d4d4d4" stroke-width="1"/><line x1="903.95" y1="374.7" x2="903.95" y2="376.5" stroke="#d4d4d4" stroke-width="1"/><line x1="915.79" y1="374.7" x2="915.79" y2="376.5" stroke="#d4d4d4" stroke-width="1"/><line x1="927.62" y1="374.7" x2="927.62" y2="378.0" stroke="#d4d4d4" stroke-width="1"/><line x1="939.46" y1="374.7" x2="939.46" y2="376.5" stroke="#d4d4d4" stroke-width="1"/><line x1="951.29" y1="374.7" x2="951.29" y2="376.5" stroke="#d4d4d4" stroke-width="1"/><line x1="963.13" y1="374.7" x2="963.13" y2="376.5" stroke="#d4d4d4" stroke-width="1"/><line x1="974.96" y1="374.7" x2="974.96" y2="376.5" stroke="#d4d4d4" stroke-width="1"/><line x1="986.80" y1="374.7" x2="986.80" y2="378.0" stroke="#d4d4d4" stroke-width="1"/><line x1="509.9" y1="358.90" x2="513.4" y2="358.90" stroke="#d4d4d4" stroke-width="1"/><line x1="509.9" y1="338.78" x2="513.4" y2="338.78" stroke="#d4d4d4" stroke-width="1"/><line x1="509.9" y1="318.66" x2="513.4" y2="318.66" stroke="#d4d4d4" stroke-width="1"/><line x1="509.9" y1="298.54" x2="513.4" y2="298.54" stroke="#d4d4d4" stroke-width="1"/><line x1="509.9" y1="278.42" x2="513.4" y2="278.42" stroke="#d4d4d4" stroke-width="1"/><line x1="509.9" y1="258.30" x2="513.4" y2="258.30" stroke="#d4d4d4" stroke-width="1"/><line x1="509.9" y1="238.18" x2="513.4" y2="238.18" stroke="#d4d4d4" stroke-width="1"/><line x1="509.9" y1="218.06" x2="513.4" y2="218.06" stroke="#d4d4d4" stroke-width="1"/><line x1="509.9" y1="197.94" x2="513.4" y2="197.94" stroke="#d4d4d4" stroke-width="1"/><line x1="509.9" y1="177.82" x2="513.4" y2="177.82" stroke="#d4d4d4" stroke-width="1"/><line x1="509.9" y1="157.70" x2="513.4" y2="157.70" stroke="#d4d4d4" stroke-width="1"/><line x1="509.9" y1="137.58" x2="513.4" y2="137.58" stroke="#d4d4d4" stroke-width="1"/><line x1="509.9" y1="117.46" x2="513.4" y2="117.46" stroke="#d4d4d4" stroke-width="1"/><line x1="509.9" y1="97.34" x2="513.4" y2="97.34" stroke="#d4d4d4" stroke-width="1"/><line x1="509.9" y1="77.22" x2="513.4" y2="77.22" stroke="#d4d4d4" stroke-width="1"/><line x1="509.9" y1="64.1" x2="513.4" y2="64.1" stroke="#d4d4d4" stroke-width="1"/><line x1="509.9" y1="374.3" x2="513.4" y2="374.3" stroke="#d4d4d4" stroke-width="1"/><path d="M513.8,64.4 L519.0,140.0 L527.0,220.0 L532.5,255.0 L537.8,290.0 L541.8,306.7 L545.9,320.2 L550.1,332.7 L555.2,341.9 L561.0,349.0 L566.0,351.8 L571.1,353.3 L578.6,352.0 L586.1,347.8 L595.0,340.0 L599.6,335.1 L609.2,326.5 L618.7,319.4 L628.3,312.5 L633.1,307.4 L636.9,307.4 L641.7,303.5 L647.5,299.7 L651.3,297.8 L655.1,294.5 L659.9,295.3 L663.8,292.6 L666.6,292.0 L669.5,289.7 L674.3,292.4 L678.5,291.5 L684.5,293.4 L688.6,290.1 L691.5,289.7 L695.3,292.0 L703.0,292.0 L710.7,293.0 L718.3,294.0 L723.1,295.5 L735.6,297.8 L745.1,302.6 L752.8,305.4 L762.4,310.6 L772.0,316.0 L777.7,318.8 L787.2,324.9 L798.7,331.6 L805.4,337.9 L811.2,340.6 L818.9,346.0 L825.6,349.4 L831.3,354.6 L837.0,357.9 L841.8,361.7 L848.5,363.2 L853.3,365.5 L857.2,366.7 L862.9,370.9 L868.6,372.0 L875.3,374.1 L881.1,373.2 L886.8,371.6 L891.6,371.5 L898.3,368.0 L906.0,362.3 L913.6,354.6 L921.3,345.0 L929.0,333.5 L936.6,319.2 L942.5,305.0 L950.7,285.0 L954.3,273.8 L958.6,262.3 L962.9,250.8 L967.2,239.3 L971.1,225.0 L977.4,200.0 L986.4,162.7" fill="none" stroke="#74c0b6" stroke-width="1.25" stroke-linejoin="round"/></svg>
<div class="t" style="left:208.20px;width:300px;text-align:right;top:62.30px;font-size:6.8px;line-height:10px;color:#5e5e5e;font-weight:normal;transform:scaleX(0.91);transform-origin:100% 50%;">1.96</div>
<div class="t" style="left:208.20px;width:300px;text-align:right;top:93.64px;font-size:6.8px;line-height:10px;color:#5e5e5e;font-weight:normal;transform:scaleX(0.91);transform-origin:100% 50%;">1.80</div>
<div class="t" style="left:208.20px;width:300px;text-align:right;top:113.76px;font-size:6.8px;line-height:10px;color:#5e5e5e;font-weight:normal;transform:scaleX(0.91);transform-origin:100% 50%;">1.70</div>
<div class="t" style="left:208.20px;width:300px;text-align:right;top:133.88px;font-size:6.8px;line-height:10px;color:#5e5e5e;font-weight:normal;transform:scaleX(0.91);transform-origin:100% 50%;">1.60</div>
<div class="t" style="left:208.20px;width:300px;text-align:right;top:154.00px;font-size:6.8px;line-height:10px;color:#5e5e5e;font-weight:normal;transform:scaleX(0.91);transform-origin:100% 50%;">1.50</div>
<div class="t" style="left:208.20px;width:300px;text-align:right;top:174.12px;font-size:6.8px;line-height:10px;color:#5e5e5e;font-weight:normal;transform:scaleX(0.91);transform-origin:100% 50%;">1.40</div>
<div class="t" style="left:208.20px;width:300px;text-align:right;top:194.24px;font-size:6.8px;line-height:10px;color:#5e5e5e;font-weight:normal;transform:scaleX(0.91);transform-origin:100% 50%;">1.30</div>
<div class="t" style="left:208.20px;width:300px;text-align:right;top:214.36px;font-size:6.8px;line-height:10px;color:#5e5e5e;font-weight:normal;transform:scaleX(0.91);transform-origin:100% 50%;">1.20</div>
<div class="t" style="left:208.20px;width:300px;text-align:right;top:234.48px;font-size:6.8px;line-height:10px;color:#5e5e5e;font-weight:normal;transform:scaleX(0.91);transform-origin:100% 50%;">1.10</div>
<div class="t" style="left:208.20px;width:300px;text-align:right;top:254.60px;font-size:6.8px;line-height:10px;color:#5e5e5e;font-weight:normal;transform:scaleX(0.91);transform-origin:100% 50%;">1.00</div>
<div class="t" style="left:208.20px;width:300px;text-align:right;top:274.72px;font-size:6.8px;line-height:10px;color:#5e5e5e;font-weight:normal;transform:scaleX(0.91);transform-origin:100% 50%;">0.90</div>
<div class="t" style="left:208.20px;width:300px;text-align:right;top:294.84px;font-size:6.8px;line-height:10px;color:#5e5e5e;font-weight:normal;transform:scaleX(0.91);transform-origin:100% 50%;">0.80</div>
<div class="t" style="left:208.20px;width:300px;text-align:right;top:314.96px;font-size:6.8px;line-height:10px;color:#5e5e5e;font-weight:normal;transform:scaleX(0.91);transform-origin:100% 50%;">0.70</div>
<div class="t" style="left:208.20px;width:300px;text-align:right;top:335.08px;font-size:6.8px;line-height:10px;color:#5e5e5e;font-weight:normal;transform:scaleX(0.91);transform-origin:100% 50%;">0.60</div>
<div class="t" style="left:208.20px;width:300px;text-align:right;top:355.20px;font-size:6.8px;line-height:10px;color:#5e5e5e;font-weight:normal;transform:scaleX(0.91);transform-origin:100% 50%;">0.50</div>
<div class="t" style="left:208.20px;width:300px;text-align:right;top:368.90px;font-size:6.8px;line-height:10px;color:#5e5e5e;font-weight:normal;transform:scaleX(0.91);transform-origin:100% 50%;">0.43</div>
<div class="t" style="left:513.80px;top:379.00px;font-size:6.6px;line-height:10px;color:#5e5e5e;font-weight:normal;transform:scaleX(0.91);transform-origin:0 50%;">8000</div>
<div class="t" style="left:472.57px;width:200px;text-align:center;top:379.00px;font-size:6.6px;line-height:10px;color:#5e5e5e;font-weight:normal;transform:scaleX(0.91);transform-origin:50% 50%;">8500</div>
<div class="t" style="left:531.75px;width:200px;text-align:center;top:379.00px;font-size:6.6px;line-height:10px;color:#5e5e5e;font-weight:normal;transform:scaleX(0.91);transform-origin:50% 50%;">9000</div>
<div class="t" style="left:590.92px;width:200px;text-align:center;top:379.00px;font-size:6.6px;line-height:10px;color:#5e5e5e;font-weight:normal;transform:scaleX(0.91);transform-origin:50% 50%;">9500</div>
<div class="t" style="left:650.10px;width:200px;text-align:center;top:379.00px;font-size:6.6px;line-height:10px;color:#5e5e5e;font-weight:normal;transform:scaleX(0.91);transform-origin:50% 50%;">10000</div>
<div class="t" style="left:709.27px;width:200px;text-align:center;top:379.00px;font-size:6.6px;line-height:10px;color:#5e5e5e;font-weight:normal;transform:scaleX(0.91);transform-origin:50% 50%;">10500</div>
<div class="t" style="left:768.45px;width:200px;text-align:center;top:379.00px;font-size:6.6px;line-height:10px;color:#5e5e5e;font-weight:normal;transform:scaleX(0.91);transform-origin:50% 50%;">11000</div>
<div class="t" style="left:827.62px;width:200px;text-align:center;top:379.00px;font-size:6.6px;line-height:10px;color:#5e5e5e;font-weight:normal;transform:scaleX(0.91);transform-origin:50% 50%;">11500</div>
<div class="t" style="left:687.30px;width:300px;text-align:right;top:379.00px;font-size:6.6px;line-height:10px;color:#5e5e5e;font-weight:normal;transform:scaleX(0.91);transform-origin:100% 50%;">12000</div>
<div class="t" style="left:649.40px;width:200px;text-align:center;top:387.20px;font-size:7.31px;line-height:10px;color:#5e5e5e;font-weight:normal;">Wavelength [nm]</div>
<div class="t" style="left:439.5px;top:212.9px;width:100px;text-align:center;font-size:7.26px;line-height:10px;color:#5e5e5e;transform:rotate(-90deg)">Reflectance Magnitude [%]</div>
<div class="b" style="left:982.30px;top:62.40px;width:54.20px;height:24.80px;background:#fff;border:1px solid #dde3ea;border-radius:2.5px;box-sizing:border-box"></div>
<div class="t" style="left:987.40px;top:64.90px;font-size:6.07px;line-height:10px;color:#333;font-weight:bold;">Legend</div>
<div class="b" style="left:986.9px;top:77.8px;width:4.6px;height:4.6px;border-radius:50%;background:#3a9888"></div>
<div class="t" style="left:994.00px;top:74.90px;font-size:6.2px;line-height:10px;color:#777;font-weight:normal;transform:scaleX(0.932);transform-origin:0 50%;">R P-pol (0deg)</div>
</body></html>
